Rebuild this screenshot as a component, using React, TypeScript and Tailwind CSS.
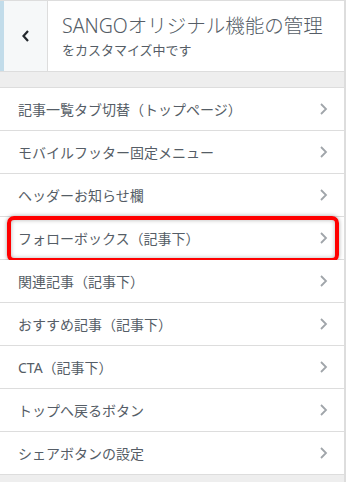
const ITEMS = [
  "記事一覧タブ切替（トップページ）",
  "モバイルフッター固定メニュー",
  "ヘッダーお知らせ欄",
  "フォローボックス（記事下）",
  "関連記事（記事下）",
  "おすすめ記事（記事下）",
  "CTA（記事下）",
  "トップへ戻るボタン",
  "シェアボタンの設定",
];

const FONT = {
  fontFamily: '"Noto Sans", "Noto Sans CJK JP", sans-serif',
};

function Chevron({ className }: { className?: string }) {
  return (
    <svg width="9" height="14" viewBox="0 0 9 14" className={className}>
      <polyline points="2,2 7,7 2,12" fill="none" stroke="currentColor" strokeWidth="1.8" />
    </svg>
  );
}

export default function App() {
  return (
    <div
      className="w-[346px] h-[482px] overflow-hidden bg-[#eeeeee] border-r-2 border-[#dddddd]"
      style={FONT}
    >
      {/* section header */}
      <div className="h-[72px] flex bg-white border-t border-b border-[#dddddd]">
        <div className="w-[48px] shrink-0 flex items-center justify-center border-l-4 border-[#c2dcea] border-r border-r-[#dddddd] bg-[#f6f8f9] text-[#23282d]">
          <svg width="10" height="14" viewBox="0 0 10 14">
            <polyline points="7,2 2.5,7 7,12" fill="none" stroke="currentColor" strokeWidth="2.2" />
          </svg>
        </div>
        <div className="flex flex-col justify-center pl-[14px] text-[#555d66]">
          <div className="text-[19.5px] leading-[26px] font-light">SANGOオリジナル機能の管理</div>
          <div className="text-[13px] leading-[18px] mt-[2px]">をカスタマイズ中です</div>
        </div>
      </div>

      {/* list */}
      <div className="mt-[15px] border-t border-[#dddddd]">
        {ITEMS.map((item, i) => (
          <div
            key={item}
            className="relative h-[43px] flex items-center justify-between bg-white border-b border-[#dddddd] pl-[18px] pr-[16px] text-[14px] text-[#555d66]"
          >
            <span>{item}</span>
            <Chevron className="text-[#a0a5aa]" />
            {i === 3 && (
              <div className="absolute -top-[1px] -bottom-[3px] left-[7px] right-[5px] rounded-[7px] border-4 border-[#ff0000] shadow-[0_0_4px_rgba(0,0,0,0.35),inset_0_0_4px_rgba(0,0,0,0.3)]" />
            )}
          </div>
        ))}
      </div>
    </div>
  );
}
